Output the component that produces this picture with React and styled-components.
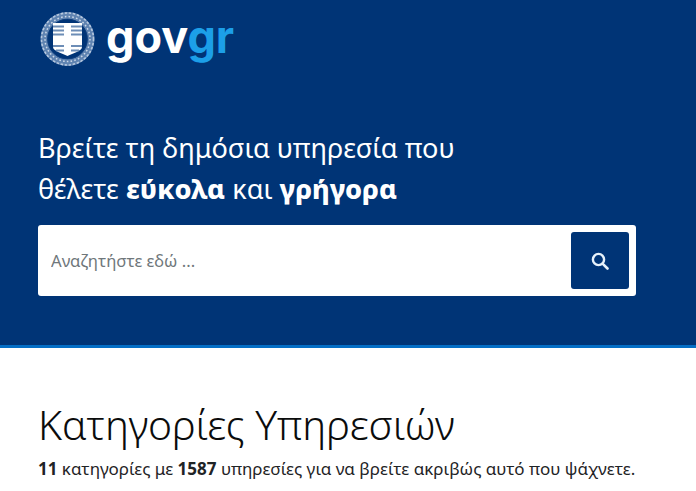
import React from 'react';
import styled, {createGlobalStyle} from 'styled-components';

const GlobalStyle = createGlobalStyle`
  html, body {
    margin: 0;
    padding: 0;
    background: #fff;
    overflow: hidden;
  }
  body {
    font-family: "Noto Sans", "Open Sans", sans-serif;
  }
  * {
    box-sizing: border-box;
  }
`;

const Hero = styled.header`
  height: 348px;
  padding: 11px 60px 0 38px;
  background: #003476;
  border-bottom: 3px solid #046ec5;
`;

const Brand = styled.div`
  display: flex;
  align-items: center;
  gap: 10px;
  height: 58px;
`;

const Wordmark = styled.span`
  font-family: Inter, "Noto Sans", sans-serif;
  font-size: 45px;
  font-weight: 700;
  line-height: 50px;
  color: #fff;
  margin-top: -6px;
`;

const WordmarkAccent = styled.span`
  color: #1c9fe8;
`;

const Headline = styled.h1`
  margin: 59px 0 0;
  font-size: 27.1px;
  font-weight: 400;
  line-height: 40.5px;
  color: #fff;

  strong {
    font-weight: 800;
  }
`;

const SearchBar = styled.form`
  display: flex;
  align-items: center;
  justify-content: space-between;
  height: 71px;
  margin-top: 16px;
  padding: 0 7px 0 13px;
  background: #fff;
  border-radius: 3px;
`;

const SearchInput = styled.input`
  flex: 1;
  border: none;
  outline: none;
  background: none;
  padding: 0;
  font: 400 16.7px "Noto Sans", sans-serif;
  color: #222;

  &::placeholder {
    color: #6f777b;
    opacity: 1;
  }
`;

const SearchButton = styled.button`
  display: flex;
  align-items: center;
  justify-content: center;
  width: 58px;
  height: 57px;
  padding: 0;
  border: none;
  border-radius: 3px;
  background: #003476;
`;

const Section = styled.section`
  padding: 48px 38px 0;
`;

const Title = styled.h2`
  margin: 0;
  font-size: 40.8px;
  font-weight: 300;
  line-height: 56px;
  color: #0b0c0c;
`;

const Summary = styled.p`
  margin: 5px 0 0;
  font-size: 17px;
  line-height: 24px;
  color: #1f2426;

  strong {
    font-weight: 700;
  }
`;

const SearchIcon = () => (
  <svg width="18" height="18" viewBox="0 0 18 18" fill="none" stroke="#e6f1fa" aria-hidden="true">
    <circle cx="7.5" cy="7.5" r="5.6" strokeWidth="2.4" />
    <path d="M11.8 11.8 L16.5 16.5" strokeWidth="2.6" strokeLinecap="round" />
  </svg>
);

const Emblem = () => (
  <svg width="58" height="58" viewBox="0 0 58 58" aria-hidden="true">
    {/* wreath */}
    <circle cx="29.5" cy="28" r="23.5" fill="none" stroke="#5f83b1" strokeWidth="7" />
    <circle cx="29.5" cy="28" r="26" fill="none" stroke="#b7c8de" strokeWidth="1.6" strokeDasharray="2.5 1.6" />
    <circle cx="29.5" cy="28" r="22.5" fill="none" stroke="#cdd9e8" strokeWidth="1.5" strokeDasharray="1.6 2.2" />
    <circle cx="29.5" cy="28" r="19.8" fill="none" stroke="#0d3d7d" strokeWidth="1" />
    {/* shield */}
    <path d="M15 12 H44 V36 C44 40 35 42 29.5 45 C24 42 15 40 15 36 Z" fill="#fff" />
    <path
      d="M15 15.5 H26 M15 19.5 H26 M15 23.5 H26 M33 15.5 H44 M33 19.5 H44 M33 23.5 H44 M15 35 H26 M33 35 H44 M18 39.5 H26 M33 39.5 H41"
      stroke="#6d8db6"
      strokeWidth="1.8"
    />
  </svg>
);

export default function App() {
  return (
    <>
      <GlobalStyle />
      <Hero>
        <Brand>
          <Emblem />
          <Wordmark>
            gov<WordmarkAccent>gr</WordmarkAccent>
          </Wordmark>
        </Brand>
        <Headline>
          Βρείτε τη δημόσια υπηρεσία που
          <br />
          θέλετε <strong>εύκολα</strong> και <strong>γρήγορα</strong>
        </Headline>
        <SearchBar onSubmit={(e) => e.preventDefault()}>
          <SearchInput placeholder="Αναζητήστε εδώ ..." />
          <SearchButton type="submit" aria-label="Αναζήτηση">
            <SearchIcon />
          </SearchButton>
        </SearchBar>
      </Hero>
      <Section>
        <Title>Κατηγορίες Υπηρεσιών</Title>
        <Summary>
          <strong>11</strong> κατηγορίες με <strong>1587</strong> υπηρεσίες για να βρείτε ακριβώς αυτό που ψάχνετε.
        </Summary>
      </Section>
    </>
  );
}
